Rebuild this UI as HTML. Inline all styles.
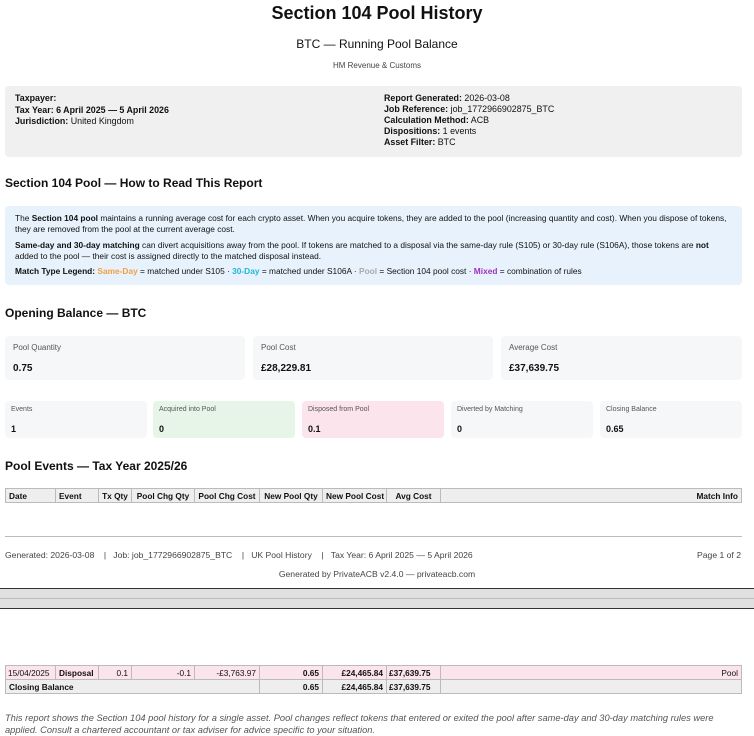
<!DOCTYPE html>
<html><head><meta charset="utf-8"><style>
*{margin:0;padding:0;box-sizing:border-box}
body{width:754px;height:729px;overflow:hidden;background:#fff;font-family:"Liberation Sans",Arial,sans-serif;color:#111;position:relative}
.a{position:absolute;white-space:nowrap}
.c{left:0;width:754px;text-align:center}
.box{position:absolute;border-radius:4px}
.lbl{font-size:8px;color:#555}
.val{font-weight:bold}
table{position:absolute;border-collapse:collapse;font-size:8.3px;table-layout:fixed}
td,th{border:1px solid #bbb;padding:0 3px;height:14px;white-space:nowrap;overflow:hidden}
th{background:#eee;font-weight:bold}
</style></head><body>
<div class="a c" style="top:3px;font-size:18px;font-weight:bold">Section 104 Pool History</div>
<div class="a c" style="top:37px;font-size:12px">BTC — Running Pool Balance</div>
<div class="a c" style="top:61px;font-size:8px;color:#444">HM Revenue &amp; Customs</div>

<div class="box" style="left:5px;top:86px;width:737px;height:71px;background:#f0f0f0"></div>
<div class="a" style="left:15px;top:93px;font-size:8.9px;line-height:11.5px"><b>Taxpayer:</b><br><b>Tax Year: 6 April 2025 — 5 April 2026</b><br><b>Jurisdiction:</b> United Kingdom</div>
<div class="a" style="left:384px;top:93px;font-size:8.9px;line-height:11px"><b>Report Generated:</b> 2026-03-08<br><b>Job Reference:</b> job_1772966902875_BTC<br><b>Calculation Method:</b> ACB<br><b>Dispositions:</b> 1 events<br><b>Asset Filter:</b> BTC</div>

<div class="a" style="left:5px;top:176px;font-size:12px;font-weight:bold">Section 104 Pool — How to Read This Report</div>
<div class="box" style="left:5px;top:206px;width:737px;height:79px;background:#e8f2fc"></div>
<div class="a" style="left:15px;top:213px;font-size:8.35px;line-height:11px">The <b>Section 104 pool</b> maintains a running average cost for each crypto asset. When you acquire tokens, they are added to the pool (increasing quantity and cost). When you dispose of tokens,<br>they are removed from the pool at the current average cost.</div>
<div class="a" style="left:15px;top:240px;font-size:8.35px;line-height:11px"><b>Same-day and 30-day matching</b> can divert acquisitions away from the pool. If tokens are matched to a disposal via the same-day rule (S105) or 30-day rule (S106A), those tokens are <b>not</b><br>added to the pool — their cost is assigned directly to the matched disposal instead.</div>
<div class="a" style="left:15px;top:266px;font-size:8.35px"><b>Match Type Legend:</b> <b style="color:#f0a040">Same-Day</b> = matched under S105 · <b style="color:#20b8d8">30-Day</b> = matched under S106A · <b style="color:#aaa">Pool</b> = Section 104 pool cost · <b style="color:#a030c0">Mixed</b> = combination of rules</div>

<div class="a" style="left:5px;top:306px;font-size:12px;font-weight:bold">Opening Balance — BTC</div>
<div class="box" style="left:5px;top:336px;width:240px;height:44px;background:#f6f7f9"></div>
<div class="box" style="left:253px;top:336px;width:240px;height:44px;background:#f6f7f9"></div>
<div class="box" style="left:501px;top:336px;width:241px;height:44px;background:#f6f7f9"></div>
<div class="a lbl" style="left:13px;top:343px">Pool Quantity</div><div class="a val" style="left:13px;top:363px;font-size:10px">0.75</div>
<div class="a lbl" style="left:261px;top:343px">Pool Cost</div><div class="a val" style="left:261px;top:363px;font-size:10px">£28,229.81</div>
<div class="a lbl" style="left:509px;top:343px">Average Cost</div><div class="a val" style="left:509px;top:363px;font-size:10px">£37,639.75</div>

<div class="box" style="left:5px;top:401px;width:142px;height:37px;background:#f6f7f9"></div>
<div class="box" style="left:153px;top:401px;width:142px;height:37px;background:#e7f4e8"></div>
<div class="box" style="left:302px;top:401px;width:142px;height:37px;background:#fce4ec"></div>
<div class="box" style="left:451px;top:401px;width:142px;height:37px;background:#f6f7f9"></div>
<div class="box" style="left:600px;top:401px;width:142px;height:37px;background:#f6f7f9"></div>
<div class="a lbl" style="left:11px;top:406px;font-size:7px">Events</div><div class="a val" style="left:11px;top:424px;font-size:9px">1</div>
<div class="a lbl" style="left:159px;top:406px;font-size:7px">Acquired into Pool</div><div class="a val" style="left:159px;top:424px;font-size:9px">0</div>
<div class="a lbl" style="left:308px;top:406px;font-size:7px">Disposed from Pool</div><div class="a val" style="left:308px;top:424px;font-size:9px">0.1</div>
<div class="a lbl" style="left:457px;top:406px;font-size:7px">Diverted by Matching</div><div class="a val" style="left:457px;top:424px;font-size:9px">0</div>
<div class="a lbl" style="left:606px;top:406px;font-size:7px">Closing Balance</div><div class="a val" style="left:606px;top:424px;font-size:9px">0.65</div>

<div class="a" style="left:5px;top:459px;font-size:12px;font-weight:bold">Pool Events — Tax Year 2025/26</div>
<table style="left:5px;top:488px;width:737px"><colgroup><col style="width:50px"><col style="width:43px"><col style="width:33px"><col style="width:63px"><col style="width:65px"><col style="width:63px"><col style="width:64px"><col style="width:54px"><col></colgroup><tr>
<th style="text-align:left">Date</th><th style="text-align:left">Event</th><th>Tx Qty</th><th>Pool Chg Qty</th><th>Pool Chg Cost</th><th>New Pool Qty</th><th>New Pool Cost</th><th>Avg Cost</th><th style="text-align:right">Match Info</th></tr></table>

<div class="a" style="left:5px;top:536px;width:737px;border-top:1px solid #bbb"></div>
<div class="a" style="left:5px;top:550px;font-size:8.6px;color:#444">Generated: 2026-03-08 &nbsp;&nbsp;&nbsp;| &nbsp;&nbsp;Job: job_1772966902875_BTC &nbsp;&nbsp;&nbsp;| &nbsp;&nbsp;UK Pool History &nbsp;&nbsp;&nbsp;| &nbsp;&nbsp;Tax Year: 6 April 2025 — 5 April 2026</div>
<div class="a" style="right:13px;top:550px;font-size:8.6px;color:#444">Page 1 of 2</div>
<div class="a c" style="top:569px;font-size:8.6px;color:#444">Generated by PrivateACB v2.4.0 — privateacb.com</div>

<div class="a" style="left:0;top:588px;width:754px;height:21px;background:#e0e0e0;border-top:1px solid #333;border-bottom:1px solid #333"></div>
<div class="a" style="left:0;top:598px;width:754px;border-top:1px solid #bbb"></div>

<table style="left:5px;top:665px;width:737px"><colgroup><col style="width:50px"><col style="width:43px"><col style="width:33px"><col style="width:63px"><col style="width:65px"><col style="width:63px"><col style="width:64px"><col style="width:54px"><col></colgroup>
<tr style="background:#fce4ec"><td style="padding:0 2px">15/04/2025</td><td style="font-weight:bold">Disposal</td><td style="text-align:right">0.1</td><td style="text-align:right">-0.1</td><td style="text-align:right">-£3,763.97</td><td style="text-align:right;font-weight:bold">0.65</td><td style="text-align:right;font-weight:bold">£24,465.84</td><td style="font-weight:bold;padding:0 2px">£37,639.75</td><td style="text-align:right">Pool</td></tr>
<tr style="background:#eee;font-weight:bold"><td colspan="5">Closing Balance</td><td style="text-align:right">0.65</td><td style="text-align:right">£24,465.84</td><td style="padding:0 2px">£37,639.75</td><td></td></tr>
</table>
<div class="a" style="left:5px;top:712px;font-size:9.3px;font-style:italic;color:#555;line-height:12px">This report shows the Section 104 pool history for a single asset. Pool changes reflect tokens that entered or exited the pool after same-day and 30-day matching rules were<br>applied. Consult a chartered accountant or tax adviser for advice specific to your situation.</div>
</body></html>
